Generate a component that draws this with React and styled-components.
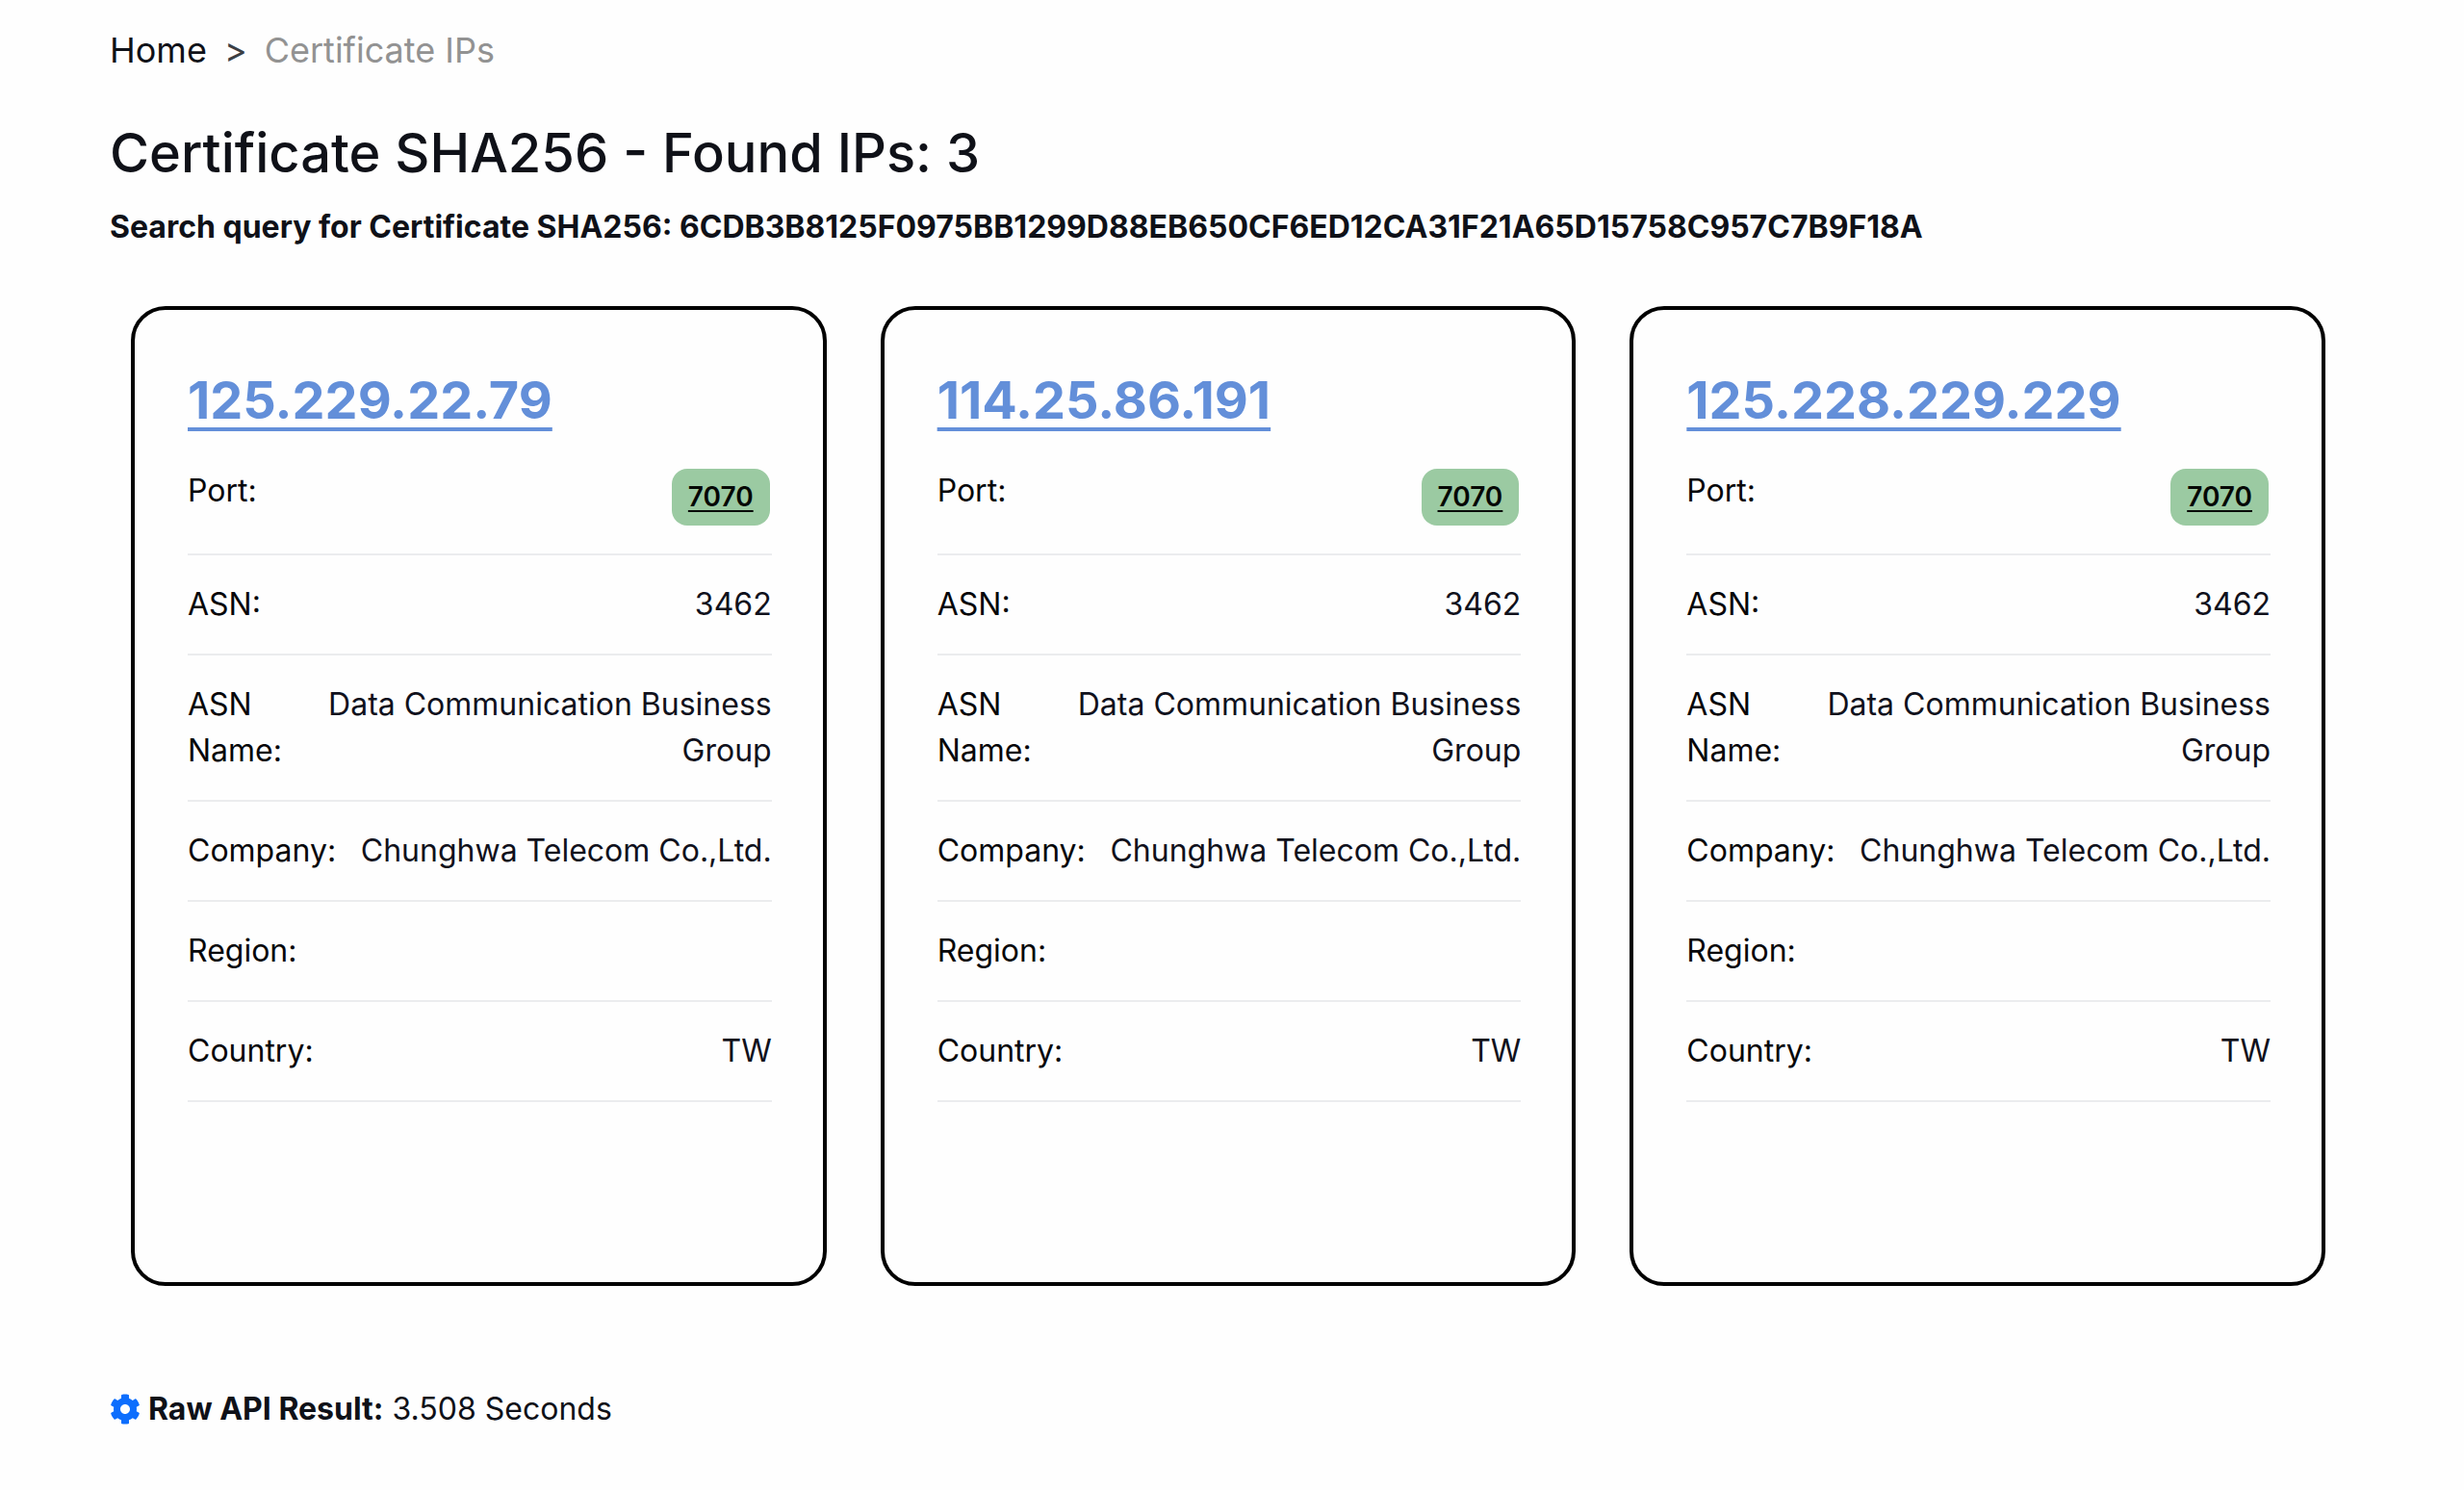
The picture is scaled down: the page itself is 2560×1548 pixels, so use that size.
import React from "react";
import styled, { createGlobalStyle } from "styled-components";
import { FaCog } from "react-icons/fa";

const GlobalStyle = createGlobalStyle`
  *, *::before, *::after { box-sizing: border-box; }
  body {
    margin: 0;
    background: #fefefe;
    color: #0f1118;
    font-family: Inter, "Liberation Sans", sans-serif;
    font-size: 32px;
    line-height: 48px;
  }
`;

const Page = styled.main`
  padding: 25px 122px 48px 114px;
`;

const Breadcrumb = styled.ol`
  display: flex;
  gap: 18px;
  margin: 0 0 46px;
  padding: 0;
  list-style: none;
  font-size: 36px;
  line-height: 54px;
`;

const Crumb = styled.li`
  color: ${(p) => (p.$current ? "#929292" : "#0f1118")};
`;

const CrumbLink = styled.a`
  color: inherit;
  text-decoration: none;
`;

const Separator = styled.li`
  color: #3c3f44;
`;

const Title = styled.h1`
  margin: 0 0 19px;
  font-size: 56px;
  line-height: 68px;
  font-weight: 500;
`;

const Query = styled.p`
  margin: 0 0 58px;
  font-weight: 700;
`;

const CardGrid = styled.section`
  display: grid;
  grid-template-columns: repeat(3, minmax(0, 1fr));
  gap: 56px;
  margin: 0 22px 104px;
`;

const Card = styled.article`
  min-height: 1018px;
  padding: 60px 53px 60px 55px;
  border: 4px solid #000;
  border-radius: 36px;
`;

const CardTitle = styled.h2`
  margin: 0 0 9px;
  font-size: 54px;
  line-height: 68px;
  font-weight: 700;
`;

const IpLink = styled.a`
  color: #638fd9;
  text-decoration: underline;
  text-decoration-thickness: 4px;
  text-underline-offset: 9px;
`;

const Details = styled.dl`
  margin: 0;
`;

const Row = styled.div`
  display: flex;
  justify-content: space-between;
  align-items: flex-start;
  padding: 27px 0;
  border-bottom: 2px solid #ebecee;
`;

const Label = styled.dt`
  color: #07070a;
`;

const Value = styled.dd`
  margin: 0;
  text-align: right;
  color: #10111c;
`;

const PortLink = styled.a`
  display: block;
  margin: 1px 2px 2px 0;
  padding: 8px 17px;
  border-radius: 16px;
  background: #9bcaa2;
  color: #050805;
  font-size: 28px;
  line-height: 43px;
  font-weight: 600;
  text-decoration: underline;
  text-decoration-thickness: 2px;
  text-underline-offset: 4px;
`;

const Footer = styled.footer`
  display: flex;
  align-items: center;
  gap: 8px;
`;

const Gear = styled(FaCog)`
  width: 32px;
  height: 32px;
  color: #0d6efd;
`;

const hosts = ["125.229.22.79", "114.25.86.191", "125.228.229.229"].map((ip) => ({
  ip,
  port: "7070",
  fields: [
    ["ASN:", "3462"],
    ["ASN Name:", "Data Communication Business Group"],
    ["Company:", "Chunghwa Telecom Co.,Ltd."],
    ["Region:", ""],
    ["Country:", "TW"],
  ],
}));

function HostCard({ host }) {
  return (
    <Card>
      <CardTitle>
        <IpLink href={`#${host.ip}`}>{host.ip}</IpLink>
      </CardTitle>
      <Details>
        <Row>
          <Label>Port:</Label>
          <Value>
            <PortLink href={`#${host.ip}-${host.port}`}>{host.port}</PortLink>
          </Value>
        </Row>
        {host.fields.map(([label, value]) => (
          <Row key={label}>
            <Label>{label}</Label>
            <Value>{value}</Value>
          </Row>
        ))}
      </Details>
    </Card>
  );
}

export default function App() {
  return (
    <>
      <GlobalStyle />
      <Page>
        <nav>
          <Breadcrumb>
            <Crumb>
              <CrumbLink href="#home">Home</CrumbLink>
            </Crumb>
            <Separator>&gt;</Separator>
            <Crumb $current>Certificate IPs</Crumb>
          </Breadcrumb>
        </nav>
        <Title>Certificate SHA256 - Found IPs: 3</Title>
        <Query>
          Search query for Certificate SHA256:
          {" 6CDB3B8125F0975BB1299D88EB650CF6ED12CA31F21A65D15758C957C7B9F18A"}
        </Query>
        <CardGrid>
          {hosts.map((host) => (
            <HostCard key={host.ip} host={host} />
          ))}
        </CardGrid>
        <Footer>
          <Gear />
          <span>
            <strong>Raw API Result:</strong> 3.508 Seconds
          </span>
        </Footer>
      </Page>
    </>
  );
}
